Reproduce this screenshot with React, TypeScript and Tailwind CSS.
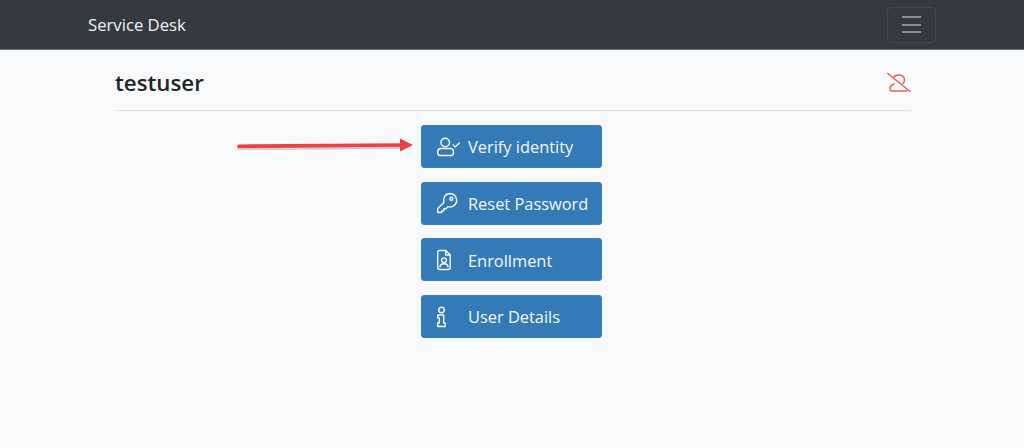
import { ReactNode } from "react";

function UserCheckIcon() {
  return (
    <svg width="24" height="22" viewBox="0.3 0 24 22" fill="none" stroke="currentColor" strokeWidth="1.4" strokeLinecap="round" strokeLinejoin="round">
      <circle cx="8.5" cy="6.5" r="4.3" />
      <path d="M3.6 12.5h9.8a3.4 3.4 0 0 1 3.4 3.4v1.2a2.4 2.4 0 0 1-2.4 2.4H3.4a2.4 2.4 0 0 1-2.4-2.4v-1.2a3.4 3.4 0 0 1 2.6-3.4z" />
      <path d="M16.5 9l2 2L22.6 7" />
    </svg>
  );
}

function KeyIcon() {
  return (
    <svg width="22" height="22" viewBox="0.8 0 22 22" fill="none" stroke="currentColor" strokeWidth="1.4" strokeLinecap="round" strokeLinejoin="round">
      <path d="M13.8 1.5a6.7 6.7 0 0 1 6.7 6.7 6.7 6.7 0 0 1-8.7 6.4l-2 2.1H7.6v2.2H5.4v1.6H1.5v-3.9l6.2-6.2a6.7 6.7 0 0 1 6.1-8.9z" />
      <circle cx="15.2" cy="6.8" r="1.5" />
    </svg>
  );
}

function FileUserIcon() {
  return (
    <svg width="22" height="22" viewBox="3.8 0 22 22" fill="none" stroke="currentColor" strokeWidth="1.4" strokeLinecap="round" strokeLinejoin="round">
      <path d="M6.5 1.5h6l4.5 4.5v12.5a2 2 0 0 1-2 2H6.5a2 2 0 0 1-2-2v-15a2 2 0 0 1 2-2z" />
      <path d="M12.5 1.5v4.5H17" />
      <circle cx="10.8" cy="11.3" r="2.4" />
      <path d="M6.8 18c0-2 1.6-3.2 4-3.2s4 1.2 4 3.2" />
    </svg>
  );
}

function InfoIcon() {
  return (
    <svg width="22" height="22" viewBox="6.3 0 22 22" fill="none" stroke="currentColor" strokeWidth="1.4" strokeLinecap="round" strokeLinejoin="round">
      <circle cx="10.8" cy="4" r="2.8" />
      <path d="M7 9h6v8h1.5v3.5H7V17h1.6v-5H7z" />
    </svg>
  );
}

function UserSlashIcon() {
  return (
    <svg className="mt-[5px]" width="24" height="22" viewBox="0 0 24 22" fill="none" stroke="#d9665c" strokeWidth="1.5" strokeLinecap="round" strokeLinejoin="round">
      <path d="M0.8 1.5L23 19.5" />
      <path d="M7 5C8 3.5 10 3 12.5 3C15.5 3 17.5 5.5 17.5 8C17.5 9.5 17 10.5 16 11.5" />
      <path d="M7 12C4.5 13 3 14 3 16.5V17.5C3 18.5 3.5 19 4.5 19H20" />
    </svg>
  );
}

function ActionButton({ icon, label }: { icon: ReactNode; label: string }) {
  return (
    <a className="flex h-[43px] w-[181px] items-center rounded-[3px] border border-[#3b80bd] bg-[#337ab7] pl-[15px] text-[16.4px] text-[#f4f8fc]">
      <span className="flex w-[31px] shrink-0 items-center">{icon}</span>
      <span className="pt-[2px]">{label}</span>
    </a>
  );
}

export default function App() {
  return (
    <div className="relative flex h-[448px] w-[1024px] flex-col overflow-hidden bg-[#f8f9fb] font-['Open_Sans','Noto_Sans',sans-serif]">
      <nav className="flex h-[50px] shrink-0 items-center justify-between border-b border-[#6c7177] bg-[#343a40] pl-[88px] pr-[88px]">
        <span className="pt-[1px] text-[16.7px] text-[#f2f3f4]">Service Desk</span>
        <button className="flex h-[36px] w-[49px] flex-col items-center justify-center gap-[5.5px] rounded-[4px] border border-[#45494f]">
          <span className="h-[2px] w-[19px] bg-[#8a8e92]" />
          <span className="h-[2px] w-[19px] bg-[#8a8e92]" />
          <span className="h-[2px] w-[19px] bg-[#8a8e92]" />
        </button>
      </nav>

      <main className="ml-[115px] mr-[113px] flex flex-col">
        <header className="flex h-[61px] items-center justify-between border-b border-[#e2e4e6]">
          <h1 className="pt-[5px] text-[22.3px] font-semibold text-[#212529]">testuser</h1>
          <UserSlashIcon />
        </header>
        <div className="mt-[14px] flex flex-col items-center gap-[13.7px] pr-[3px]">
          <ActionButton icon={<UserCheckIcon />} label="Verify identity" />
          <ActionButton icon={<KeyIcon />} label="Reset Password" />
          <ActionButton icon={<FileUserIcon />} label="Enrollment" />
          <ActionButton icon={<InfoIcon />} label="User Details" />
        </div>
      </main>

      {/* annotation arrow drawn over the screenshot */}
      <svg className="absolute left-[235px] top-[135px]" width="182" height="20" viewBox="0 0 182 20" fill="none">
        <path d="M4 13L166 12" stroke="#a99" strokeOpacity="0.5" strokeWidth="4" strokeLinecap="round" />
        <path d="M4 11.2L168 10" stroke="#ee3f44" strokeWidth="3.6" strokeLinecap="round" />
        <path d="M165 3.5L178 10L165 16.5z" fill="#ee3f44" />
      </svg>
    </div>
  );
}
